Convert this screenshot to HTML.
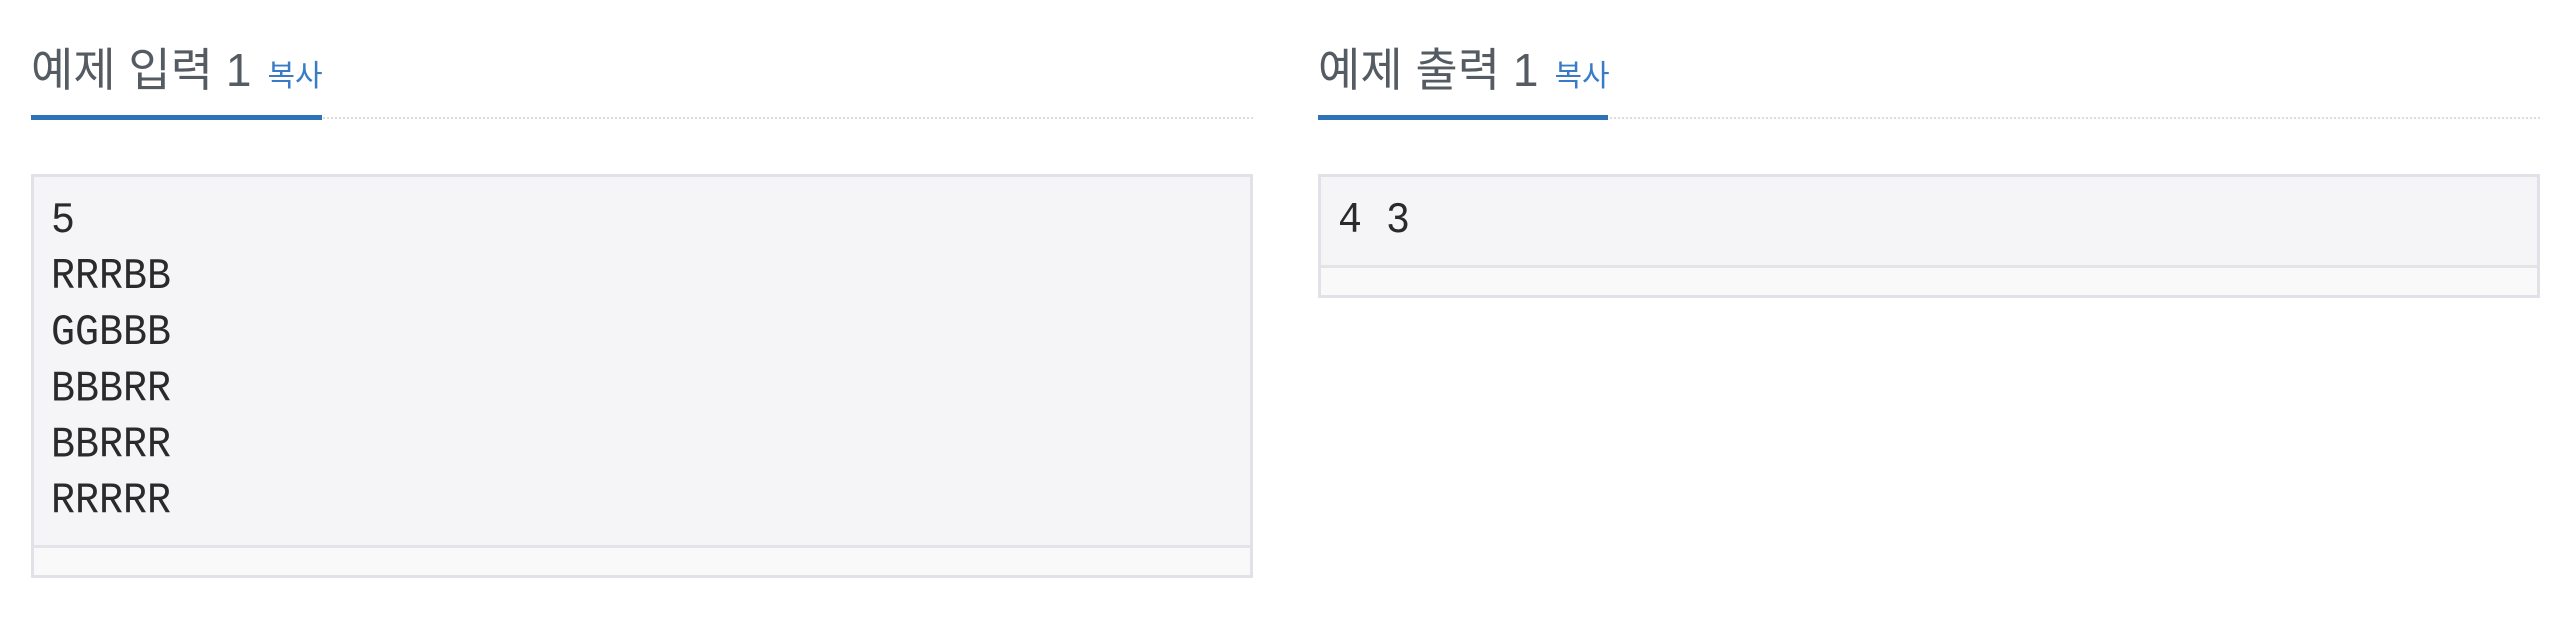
<!DOCTYPE html>
<html><head><meta charset="utf-8"><style>
html,body{margin:0;padding:0;background:#fff;width:2576px;height:624px;overflow:hidden}
.p{position:absolute;top:0}
.t{position:absolute;top:40px;left:0;font-family:"Liberation Sans","Noto Sans CJK KR",sans-serif;font-size:46px;color:#555b62;white-space:nowrap;line-height:60px}
.t span{font-size:30px;color:#3a7bc8;margin-left:16px}
.dl{position:absolute;top:117px;height:0;border-top:2px dotted #dcdcdc}
.bl{position:absolute;top:115px;height:5px;background:#2e72b8}
.box{position:absolute;top:174px;border:3px solid #e1e1e8;background:#f5f5f8;box-sizing:border-box}
.box pre{margin:0;padding:16px 17px 15px;font-family:"Liberation Mono",monospace;font-size:40px;line-height:50.9px;color:#2a2a2a;display:block;transform:scaleY(1.1);transform-origin:0 0}
.ft{position:absolute;left:0;right:0;bottom:0;border-top:3px solid #e4e4e8;background:#f9f9f9;height:27px}
</style></head><body>
<div class="p" style="left:31px;width:1222px">
<div class="t">예제 입력 1<span>복사</span></div>
<div class="dl" style="left:0;right:0"></div>
<div class="bl" style="left:0;width:291px"></div>
<div class="box" style="left:0;width:1222px;height:404px"><pre>5
RRRBB
GGBBB
BBBRR
BBRRR
RRRRR</pre><div class="ft"></div></div>
</div>
<div class="p" style="left:1318px;width:1222px">
<div class="t">예제 출력 1<span>복사</span></div>
<div class="dl" style="left:0;right:0"></div>
<div class="bl" style="left:0;width:290px"></div>
<div class="box" style="left:0;width:1222px;height:124px"><pre>4 3</pre><div class="ft"></div></div>
</div>
</body></html>
